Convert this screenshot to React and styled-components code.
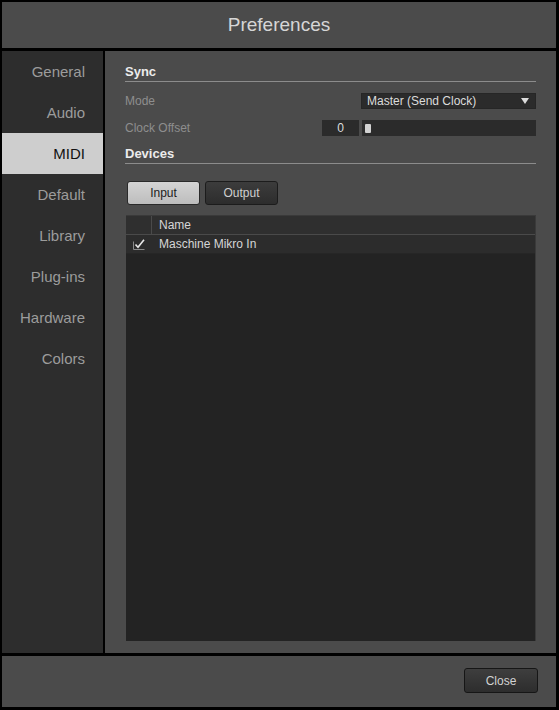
import styled, { createGlobalStyle } from "styled-components";

const GlobalStyle = createGlobalStyle`
  html, body {
    margin: 0;
    padding: 0;
    background: #000;
  }
  * {
    box-sizing: border-box;
  }
`;

const Window = styled.div`
  width: 559px;
  height: 710px;
  padding: 2px 3px 3px 2px;
  display: flex;
  flex-direction: column;
  gap: 3px;
  background: #000;
  font-family: "Liberation Sans", Arial, sans-serif;
`;

const TitleBar = styled.header`
  height: 46px;
  flex-shrink: 0;
  background: #4b4b4b;
  display: flex;
  align-items: center;
  justify-content: center;
  color: #d6d6d6;
  font-size: 19px;
  padding-bottom: 1px;
`;

const Main = styled.div`
  flex: 1;
  display: flex;
  gap: 2px;
  min-height: 0;
`;

const Sidebar = styled.nav`
  width: 101px;
  flex-shrink: 0;
  background: #2d2d2d;
  display: flex;
  flex-direction: column;
`;

const NavItem = styled.div`
  height: 41px;
  display: flex;
  align-items: center;
  justify-content: flex-end;
  padding-right: 18px;
  font-size: 15px;
  color: ${(p) => (p.$active ? "#111" : "#9c9c9c")};
  background: ${(p) => (p.$active ? "#cecece" : "transparent")};
`;

const Content = styled.section`
  flex: 1;
  background: #4b4b4b;
  padding: 10px 20px 12px 20px;
  display: flex;
  flex-direction: column;
`;

const Heading = styled.h2`
  margin: ${(p) => p.$top || 0}px 0 0 0;
  height: 21px;
  display: flex;
  align-items: center;
  border-bottom: 1px solid #8c8c8c;
  color: #ececec;
  font-size: 13px;
  font-weight: bold;
`;

const Row = styled.div`
  display: flex;
  align-items: center;
  height: 16px;
  margin-top: ${(p) => p.$top}px;
`;

const Label = styled.span`
  flex: 1;
  color: #8e8e8e;
  font-size: 12px;
`;

const Select = styled.div`
  width: 175px;
  height: 16px;
  background: #2b2b2b;
  border: 1px solid #262626;
  display: flex;
  align-items: center;
  justify-content: space-between;
  padding: 0 6px 0 5px;
  color: #dcdcdc;
  font-size: 12px;
`;

const NumberBox = styled.div`
  width: 37px;
  height: 16px;
  background: #2b2b2b;
  display: flex;
  align-items: center;
  justify-content: center;
  color: #dcdcdc;
  font-size: 12px;
  margin-right: 3px;
`;

const Slider = styled.div`
  width: 174px;
  height: 16px;
  background: #2b2b2b;
  display: flex;
  align-items: center;
  padding-left: 3px;
`;

const Handle = styled.div`
  width: 6px;
  height: 9px;
  border-radius: 1px;
  background: #d2d2d2;
`;

const Tabs = styled.div`
  display: flex;
  gap: 5px;
  margin: 17px 0 0 2px;
`;

const TabButton = styled.button`
  width: 73px;
  height: 24px;
  border-radius: 3px;
  font-family: inherit;
  font-size: 12px;
  padding: 0;
  border: 1px solid ${(p) => (p.$active ? "#2a2a2a" : "#1c1c1c")};
  color: ${(p) => (p.$active ? "#1c1c1c" : "#cfcfcf")};
  background: ${(p) =>
    p.$active
      ? "linear-gradient(#d4d4d4, #bdbdbd)"
      : "linear-gradient(#3c3c3c, #2d2d2d)"};
`;

const Table = styled.div`
  flex: 1;
  margin-top: 10px;
  margin-left: 1px;
  background: #232323;
  border-top: 1px solid #3a3a3a;
  border-right: 1px solid #3a3a3a;
  display: flex;
  flex-direction: column;
`;

const TableRow = styled.div`
  display: flex;
  height: 19px;
  background: ${(p) => (p.$head ? "#2f2f2f" : "#2c2c2c")};
  border-bottom: 1px solid ${(p) => (p.$head ? "#4a4a4a" : "#262626")};
`;

const CheckCell = styled.div`
  width: 26px;
  display: flex;
  align-items: center;
  justify-content: center;
  border-right: 1px solid ${(p) => (p.$head ? "#4a4a4a" : "transparent")};
`;

const NameCell = styled.div`
  flex: 1;
  display: flex;
  align-items: center;
  padding-left: 7px;
  color: #d6d6d6;
  font-size: 12px;
`;

const Footer = styled.footer`
  height: 51px;
  flex-shrink: 0;
  background: #4b4b4b;
  display: flex;
  align-items: center;
  justify-content: flex-end;
  padding: 0 18px 2px 0;
`;

const CloseButton = styled.button`
  width: 74px;
  height: 25px;
  border-radius: 3px;
  border: 1px solid #161616;
  background: linear-gradient(#3e3e3e, #2d2d2d);
  color: #d2d2d2;
  font-family: inherit;
  font-size: 12px;
  padding: 0;
`;

const Check = () => (
  <svg width="12" height="11" viewBox="0 0 12 11">
    <path d="M0.5 2.5 V10.5 H11.5" fill="none" stroke="#8a8a8a" strokeWidth="1" />
    <path d="M2.5 5.5 L5 8.2 L11 0.8" fill="none" stroke="#e8e8e8" strokeWidth="1.6" />
  </svg>
);

const Arrow = () => (
  <svg width="8" height="6" viewBox="0 0 8 6">
    <path d="M0 0 H8 L4 6 Z" fill="#dcdcdc" />
  </svg>
);

const navItems = ["General", "Audio", "MIDI", "Default", "Library", "Plug-ins", "Hardware", "Colors"];

export default function App() {
  return (
    <>
      <GlobalStyle />
      <Window>
        <TitleBar>Preferences</TitleBar>
        <Main>
          <Sidebar>
            {navItems.map((item) => (
              <NavItem key={item} $active={item === "MIDI"}>
                {item}
              </NavItem>
            ))}
          </Sidebar>
          <Content>
            <Heading>Sync</Heading>
            <Row $top={11}>
              <Label>Mode</Label>
              <Select>
                <span>Master (Send Clock)</span>
                <Arrow />
              </Select>
            </Row>
            <Row $top={11}>
              <Label>Clock Offset</Label>
              <NumberBox>0</NumberBox>
              <Slider>
                <Handle />
              </Slider>
            </Row>
            <Heading $top={7}>Devices</Heading>
            <Tabs>
              <TabButton $active>Input</TabButton>
              <TabButton>Output</TabButton>
            </Tabs>
            <Table>
              <TableRow $head>
                <CheckCell $head />
                <NameCell>Name</NameCell>
              </TableRow>
              <TableRow>
                <CheckCell>
                  <Check />
                </CheckCell>
                <NameCell>Maschine Mikro In</NameCell>
              </TableRow>
            </Table>
          </Content>
        </Main>
        <Footer>
          <CloseButton>Close</CloseButton>
        </Footer>
      </Window>
    </>
  );
}
